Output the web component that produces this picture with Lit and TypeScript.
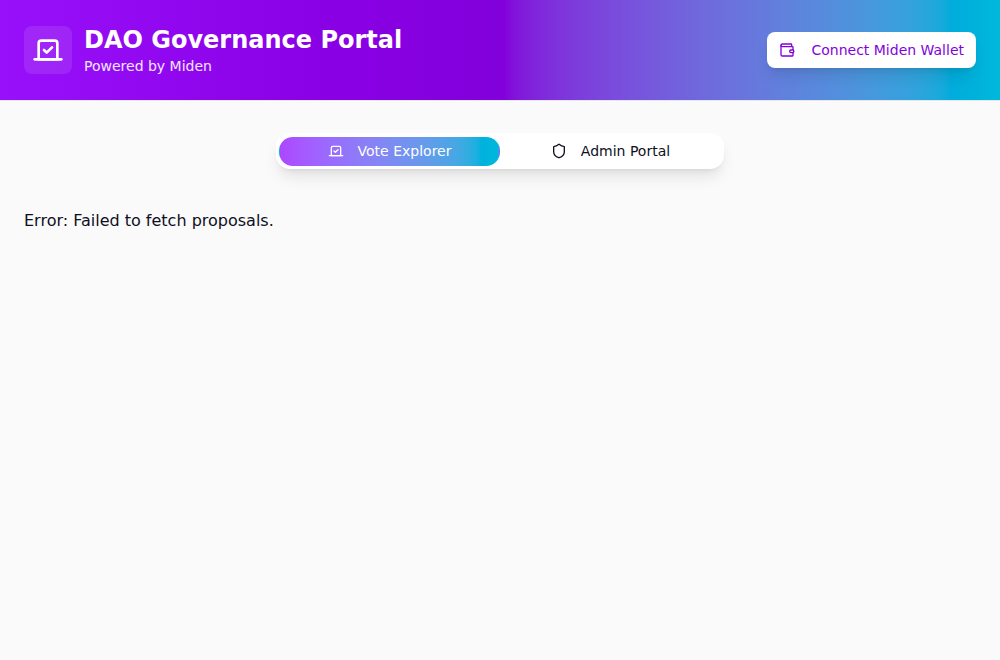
import { LitElement, html, css, svg } from "lit";
import { customElement, property, state } from "lit/decorators.js";
import { classMap } from "lit/directives/class-map.js";

const glyphs = {
  vote: svg`<path d="m9 12 2 2 4-4"/><path d="M5 7c0-1.1.9-2 2-2h10a2 2 0 0 1 2 2v12H5V7Z"/><path d="M22 19H2"/>`,
  wallet: svg`<path d="M19 7V4a1 1 0 0 0-1-1H5a2 2 0 0 0 0 4h15a1 1 0 0 1 1 1v4h-3a2 2 0 0 0 0 4h3a1 1 0 0 0 1-1v-2a1 1 0 0 0-1-1"/><path d="M3 5v14a2 2 0 0 0 2 2h15a1 1 0 0 0 1-1v-4"/>`,
  shield: svg`<path d="M20 13c0 5-3.5 7.5-7.66 8.95a1 1 0 0 1-.67-.01C7.5 20.5 4 18 4 13V6a1 1 0 0 1 1-1c2 0 4.5-1.2 6.24-2.72a1.17 1.17 0 0 1 1.52 0C14.51 3.81 17 5 19 5a1 1 0 0 1 1 1z"/>`,
};

type GlyphName = keyof typeof glyphs;

@customElement("line-icon")
export class LineIcon extends LitElement {
  @property() name: GlyphName = "vote";

  static styles = css`
    :host {
      display: block;
      flex: none;
      width: 16px;
      height: 16px;
    }
    .glyph {
      display: block;
      width: 100%;
      height: 100%;
      fill: none;
      stroke: currentColor;
      stroke-width: 2;
      stroke-linecap: round;
      stroke-linejoin: round;
    }
  `;

  render() {
    return html`<svg class="glyph" viewBox="0 0 24 24" aria-hidden="true">${glyphs[this.name]}</svg>`;
  }
}

const tabs: { id: string; label: string; icon: GlyphName }[] = [
  { id: "votes", label: "Vote Explorer", icon: "vote" },
  { id: "admin", label: "Admin Portal", icon: "shield" },
];

@customElement("app-root")
export class AppRoot extends LitElement {
  @state() private active = "votes";

  static styles = css`
    :host {
      display: block;
      min-height: 100vh;
      background: #fafafa;
      color: #0f0f23;
      font-family: "DejaVu Sans", sans-serif;
      font-size: 16px;
      line-height: 24px;
    }
    .header {
      display: flex;
      align-items: center;
      justify-content: space-between;
      gap: 24px;
      padding: 24px;
      border-bottom: 1px solid #e5e7eb;
      background: linear-gradient(
        to right in oklab,
        oklch(55.8% 0.288 302.321),
        oklch(49.6% 0.265 301.924),
        oklch(71.5% 0.143 215.221)
      );
    }
    .brand {
      display: flex;
      align-items: center;
      gap: 12px;
      color: #fff;
    }
    .logo {
      padding: 8px;
      border-radius: 8px;
      background: rgba(255, 255, 255, 0.1);
    }
    .logo-icon {
      width: 32px;
      height: 32px;
    }
    .title {
      margin: 0;
      font-size: 24px;
      line-height: 32px;
      font-weight: 700;
    }
    .subtitle {
      margin: 0;
      font-size: 14px;
      line-height: 20px;
      color: oklch(94.6% 0.033 307.174);
    }
    button {
      display: flex;
      align-items: center;
      justify-content: center;
      margin: 0;
      font: inherit;
      font-size: 14px;
      line-height: 20px;
      white-space: nowrap;
      cursor: pointer;
    }
    .connect {
      gap: 16px;
      padding: 8px 12px;
      border: 0;
      border-radius: 8px;
      background: #fff;
      color: oklch(49.6% 0.265 301.924);
      box-shadow:
        0 10px 15px -3px rgba(0, 0, 0, 0.1),
        0 4px 6px -4px rgba(0, 0, 0, 0.1);
    }
    .main {
      padding: 32px 24px;
    }
    .tabs {
      display: grid;
      grid-template-columns: 1fr 1fr;
      align-items: center;
      box-sizing: border-box;
      max-width: 448px;
      height: 36px;
      margin: 0 auto 40px;
      padding: 4px 3px 3px;
      border-radius: 14px;
      background: #fff;
      box-shadow:
        0 10px 15px -3px rgba(0, 0, 0, 0.1),
        0 4px 6px -4px rgba(0, 0, 0, 0.1);
    }
    .tab {
      gap: 14px;
      padding: 3px 8px 4px;
      height: 29px;
      border: 1px solid transparent;
      border-radius: 14px;
      background: transparent;
      color: #0f0f23;
    }
    .tab.active {
      background: linear-gradient(
        to right in oklab,
        oklch(62.7% 0.265 303.9),
        oklch(71.5% 0.143 215.221)
      );
      color: #fff;
    }
    .message {
      margin: 0;
    }
  `;

  render() {
    return html`
      <header class="header">
        <div class="brand">
          <div class="logo"><line-icon class="logo-icon" name="vote"></line-icon></div>
          <div>
            <h1 class="title">DAO Governance Portal</h1>
            <p class="subtitle">Powered by Miden</p>
          </div>
        </div>
        <button class="connect" type="button">
          <line-icon name="wallet"></line-icon>Connect Miden Wallet
        </button>
      </header>
      <main class="main">
        <div class="tabs" role="tablist">
          ${tabs.map(
            (tab) => html`<button
              type="button"
              role="tab"
              class=${classMap({ tab: true, active: tab.id === this.active })}
              aria-selected=${tab.id === this.active ? "true" : "false"}
              @click=${() => (this.active = tab.id)}
            ><line-icon name=${tab.icon}></line-icon>${tab.label}</button>`
          )}
        </div>
        <p class="message" role="alert">Error: Failed to fetch proposals.</p>
      </main>
    `;
  }
}
